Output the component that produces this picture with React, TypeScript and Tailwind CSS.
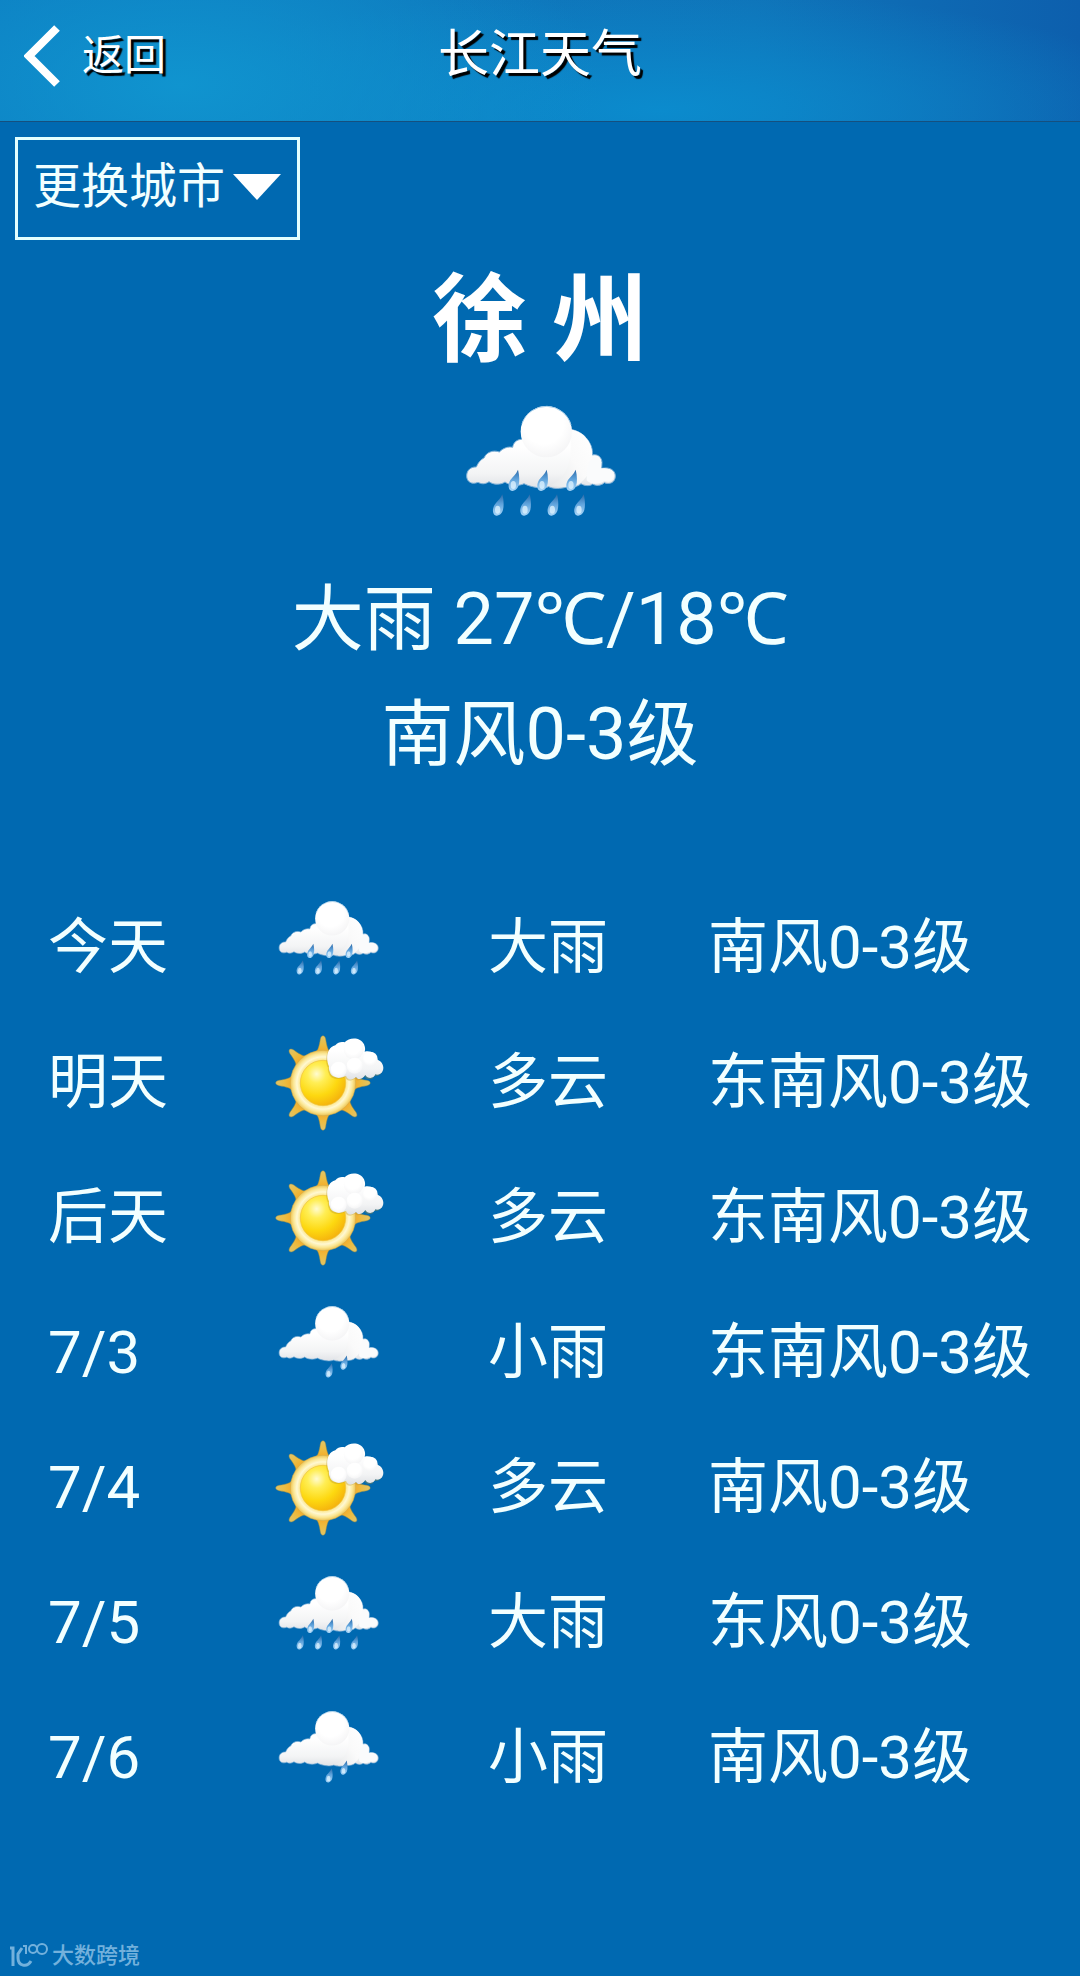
import React, { useState } from "react";

type Clima = "heavy" | "light" | "cloudy";

const pronostico: { dia: string; icon: Clima; texto: string; viento: string }[] = [
  { dia: "今天", icon: "heavy", texto: "大雨", viento: "南风0-3级" },
  { dia: "明天", icon: "cloudy", texto: "多云", viento: "东南风0-3级" },
  { dia: "后天", icon: "cloudy", texto: "多云", viento: "东南风0-3级" },
  { dia: "7/3", icon: "light", texto: "小雨", viento: "东南风0-3级" },
  { dia: "7/4", icon: "cloudy", texto: "多云", viento: "南风0-3级" },
  { dia: "7/5", icon: "heavy", texto: "大雨", viento: "东风0-3级" },
  { dia: "7/6", icon: "light", texto: "小雨", viento: "南风0-3级" },
];

const heavyDrops = [
  [342, 692],
  [428, 692],
  [515, 692],
  [295, 766],
  [377, 766],
  [459, 766],
  [539, 766],
];

const lightDrops = [
  [425, 757],
  [492, 722],
];

function Defs() {
  return (
    <svg width="0" height="0" className="absolute" aria-hidden="true">
      <defs>
        <linearGradient id="cloud" x1="0" y1="0" x2="0" y2="1">
          <stop offset="0.3" stopColor="#ffffff" />
          <stop offset="0.75" stopColor="#f3f4f5" />
          <stop offset="1" stopColor="#e0e2e6" />
        </linearGradient>
        <radialGradient id="puff" cx="0.45" cy="0.35" r="0.65">
          <stop offset="0.6" stopColor="#ffffff" />
          <stop offset="1" stopColor="#f5f5f6" />
        </radialGradient>
        <linearGradient id="side" x1="1" y1="0" x2="0" y2="1">
          <stop offset="0" stopColor="#ffffff" />
          <stop offset="0.5" stopColor="#fafafa" />
          <stop offset="1" stopColor="#e6e8ea" />
        </linearGradient>
        <linearGradient id="drop" x1="0" y1="0" x2="0" y2="1">
          <stop offset="0" stopColor="#2a69a8" />
          <stop offset="0.45" stopColor="#5fa3dc" />
          <stop offset="1" stopColor="#a9d6f8" />
        </linearGradient>
        <radialGradient id="sun" cx="0.36" cy="0.3" r="0.8">
          <stop offset="0" stopColor="#fffbd0" />
          <stop offset="0.25" stopColor="#ffee55" />
          <stop offset="0.6" stopColor="#fdd810" />
          <stop offset="1" stopColor="#f3a90c" />
        </radialGradient>
        <radialGradient id="ring">
          <stop offset="0.66" stopColor="#fbe27a" />
          <stop offset="0.8" stopColor="#fff8d2" />
          <stop offset="0.9" stopColor="#fbe795" />
          <stop offset="1" stopColor="#edc456" />
        </radialGradient>
        <linearGradient id="ray" x1="0" y1="0" x2="0" y2="1">
          <stop offset="0" stopColor="#e0c468" />
          <stop offset="0.5" stopColor="#edbc40" />
          <stop offset="1" stopColor="#f4a826" />
        </linearGradient>
      </defs>
    </svg>
  );
}

function RainIcon({ drops, className }: { drops: number[][]; className: string }) {
  return (
    <svg viewBox="168 461 504 432" className={className} aria-hidden="true">
      <path
        d="M200 677 C200 660 212 649 229 650 C236 634 244 627 253 622 C258 606 280 598 298 605 C310 593 324 588 338 591 C340 577 350 568 364 567 L480 540 C505 530 540 541 558 562 C572 578 579 595 577 614 C592 610 605 620 606 636 L605 654 C628 649 646 659 646 677 C646 696 629 704 613 697 C604 706 588 708 578 701 C568 709 552 706 543 700 C530 712 510 711 500 710 C482 716 460 716 446 709 C430 716 395 712 372 700 C358 708 328 706 315 695 C303 704 280 704 267 694 C256 702 244 702 234 696 C215 704 200 694 200 677 Z"
        fill="url(#cloud)"
        stroke="#7fb1d8"
        strokeWidth="3"
      />
      <path
        d="M513 538 C545 541 578 570 576 616 C577 655 560 690 530 704 C500 712 474 710 452 704 C490 690 510 650 512 600 Z"
        fill="url(#side)"
      />
      <path
        d="M560 665 C562 640 575 618 590 616 C600 618 606 630 603 654 C625 651 642 660 642 677 C641 692 626 698 613 692 C598 703 570 703 560 690 Z"
        fill="#fafbfc"
      />
      <circle cx="439" cy="544" r="77" fill="url(#puff)" />
      <path d="M366 520 A77 77 0 0 1 513 524" fill="none" stroke="#a9cfea" strokeWidth="3" />
      {drops.map(([x, y]) => (
        <g key={`${x}-${y}`} transform={`translate(${x} ${y})`}>
          <path d="M12 -34 C17 -14 17 4 13 16 C8 28 -4 33 -11 28 C-18 22 -18 8 -11 -3 C-4 -12 6 -20 12 -34 Z" fill="url(#drop)" />
          <ellipse cx="-2" cy="12" rx="8" ry="12" fill="#e2f4ff" opacity="0.75" />
        </g>
      ))}
    </svg>
  );
}

function SunIcon({ className }: { className: string }) {
  return (
    <svg viewBox="36 48 336 288" className={className} aria-hidden="true">
      {[0, 45, 90, 135, 180, 225, 270, 315].map((a) => (
        <path
          key={a}
          d="M162 104 C174 98 178 80 181 60 C184 47 194 47 197 60 C200 80 204 98 216 104 Z"
          fill="url(#ray)"
          stroke="#8f8a4c"
          strokeWidth="1.5"
          transform={`rotate(${a} 189 192)`}
        />
      ))}
      <circle cx="189" cy="192" r="98" fill="url(#ring)" stroke="#d3ac4a" strokeWidth="1.5" />
      <circle cx="189" cy="192" r="68" fill="url(#sun)" stroke="#efc33c" strokeWidth="2" />
      <path
        d="M207 142 C197 122 200 84 226 79 C234 68 246 68 254 70 C268 54 302 54 312 76 C316 86 316 92 314 98 C332 92 350 106 352 122 C366 126 374 142 368 156 C364 166 352 169 346 166 C342 180 322 180 316 168 C306 184 292 182 288 174 C276 186 262 182 258 170 C244 180 214 178 210 160 C207 154 206 148 207 142 Z"
        fill="#b5912e"
        opacity="0.35"
        transform="translate(-3 4)"
      />
      <path
        d="M207 142 C197 122 200 84 226 79 C234 68 246 68 254 70 C268 54 302 54 312 76 C316 86 316 92 314 98 C332 92 350 106 352 122 C366 126 374 142 368 156 C364 166 352 169 346 166 C342 180 322 180 316 168 C306 184 292 182 288 174 C276 186 262 182 258 170 C244 180 214 178 210 160 C207 154 206 148 207 142 Z"
        fill="url(#cloud)"
      />
      <circle cx="281" cy="91" r="30" fill="url(#puff)" />
      <circle cx="331" cy="120" r="22" fill="url(#puff)" />
      <circle cx="236" cy="152" r="24" fill="url(#puff)" />
      <circle cx="284" cy="140" r="24" fill="url(#puff)" />
    </svg>
  );
}

function ClimaIcon({ icon, className }: { icon: Clima; className: string }) {
  if (icon === "cloudy") return <SunIcon className={className} />;
  return <RainIcon drops={icon === "heavy" ? heavyDrops : lightDrops} className={className} />;
}

function App() {
  const [abierto, setAbierto] = useState(false);

  return (
    <div className="min-h-screen flex flex-col bg-[#0069b1] text-[#f2ffff] font-['Roboto','Noto_Sans','Noto_Sans_CJK_SC',sans-serif]">
      <Defs />
      <header className="grid grid-cols-3 items-start h-[122px] pt-6 border-b border-[#15507f] bg-[radial-gradient(ellipse_420px_200px_at_180px_85px,#1094cf_0%,#1094cf00_100%),radial-gradient(ellipse_520px_120px_at_660px_110px,#0b8bcd_0%,#0b8bcd00_100%),linear-gradient(90deg,#0c7bc0_0%,#0f74b9_70%,#0d5fad_100%)] text-white">
        <button className="flex items-center gap-[22px] pl-6 text-[42px] leading-[62px] [text-shadow:3px_3px_1px_#000]">
          <svg viewBox="0 0 36 64" className="w-9 h-16" aria-hidden="true">
            <path d="M33 4 L5 32 L33 60" fill="none" stroke="white" strokeWidth="8" />
          </svg>
          返回
        </button>
        <h1 className="text-center text-[51px] leading-[62px] [text-shadow:3px_3px_1px_#000]">长江天气</h1>
      </header>

      <main className="flex flex-col">
        <button
          onClick={() => setAbierto(!abierto)}
          aria-expanded={abierto}
          className="self-start flex items-center gap-2 mt-[15px] ml-[15px] h-[103px] pl-[15px] pr-4 pb-1 border-3 border-[#e2ffff] text-[48px]"
        >
          更换城市
          <svg viewBox="0 0 48 26" className="w-12 h-[26px]" aria-hidden="true">
            <path d="M0 0 H48 L24 26 Z" fill="white" />
          </svg>
        </button>

        <section className="flex flex-col items-center text-[72px] leading-[115px]">
          <h2 className="mt-3 mb-4 text-[96px] leading-[136px] font-bold text-white">徐 州</h2>
          <ClimaIcon icon="heavy" className="w-[168px] h-36" />
          <p className="mt-3.5">大雨 27℃/18℃</p>
          <p>南风0-3级</p>
        </section>

        <table className="mt-22 w-full table-fixed text-left text-[60px] leading-[135px]">
          <colgroup>
            <col className="w-[272px]" />
            <col className="w-[216px]" />
            <col className="w-[220px]" />
            <col />
          </colgroup>
          <tbody>
            {pronostico.map((p) => (
              <tr key={p.dia} className="h-[135px]">
                <td className="pl-12">{p.dia}</td>
                <td>
                  <ClimaIcon icon={p.icon} className="w-28 h-24" />
                </td>
                <td>{p.texto}</td>
                <td className="whitespace-nowrap">{p.viento}</td>
              </tr>
            ))}
          </tbody>
        </table>
      </main>

      <footer className="mt-auto flex items-center gap-1 pl-2 pb-1 text-[22px] leading-8 font-medium text-[#73b1dc]">
        <svg viewBox="0 0 40 28" className="w-10 h-7" fill="none" stroke="currentColor" aria-hidden="true">
          <path d="M2 6 H5 V24" strokeWidth="3" />
          <path d="M14 6 L10 12 V16 C10 24 19 26 23 19" strokeWidth="3" />
          <path d="M15 4 H18 V12" strokeWidth="2" />
          <circle cx="25" cy="7" r="4" strokeWidth="2" />
          <circle cx="34" cy="7" r="5" strokeWidth="2" />
        </svg>
        大数跨境
      </footer>
    </div>
  );
}

export default App;
